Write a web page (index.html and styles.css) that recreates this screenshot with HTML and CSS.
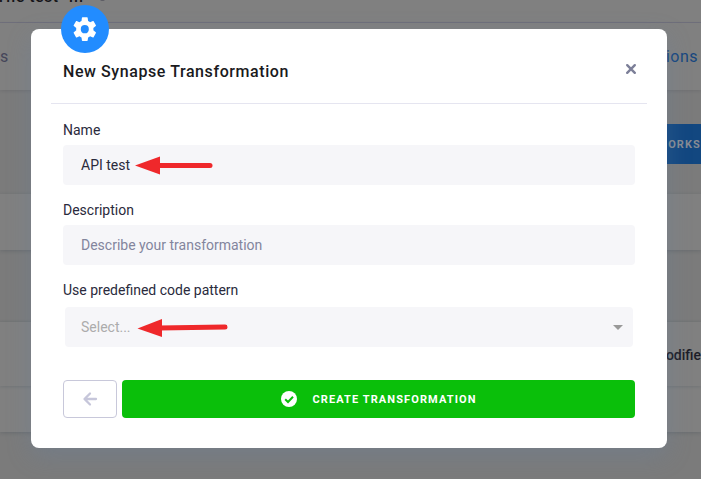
FILE: index.html
```html
<!DOCTYPE html>
<html lang="en">
<head>
<meta charset="utf-8">
<title>New Synapse Transformation</title>
<link rel="stylesheet" href="styles.css">
</head>
<body>
<div class="page">
  <header class="topbar"><span>The test -m</span><i class="topbar-caret"></i></header>
  <nav class="tabs"><span class="tab">s</span><span class="tab active">ions</span></nav>
  <section class="toolbar"><div class="works">ORKS</div></section>
  <div class="card"></div>
  <div class="table">
    <div class="table-head">odifie</div>
    <div class="table-row"></div>
  </div>
</div>
<div class="overlay">
  <main class="modal">
    <div class="badge">
      <svg width="27.600" height="28.400" viewBox="0 0 24 24" preserveAspectRatio="none" fill="#fff"><path d="M12 15.5A3.5 3.5 0 0 1 8.500 12 3.500 3.500 0 0 1 12 8.500 3.500 3.500 0 0 1 15.500 12 3.500 3.500 0 0 1 12 15.500M19.430 12.970C19.470 12.650 19.500 12.330 19.500 12S19.470 11.340 19.430 11L21.540 9.370C21.730 9.220 21.780 8.950 21.660 8.730L19.660 5.270C19.540 5.050 19.270 4.960 19.050 5.050L16.560 6.050C16.040 5.660 15.500 5.320 14.870 5.070L14.500 2.420C14.460 2.180 14.250 2 14 2H10C9.750 2 9.540 2.180 9.500 2.420L9.130 5.070C8.500 5.320 7.960 5.660 7.440 6.050L4.950 5.050C4.730 4.960 4.460 5.050 4.340 5.270L2.340 8.730C2.210 8.950 2.270 9.220 2.460 9.370L4.570 11C4.530 11.340 4.500 11.670 4.500 12S4.530 12.650 4.570 12.970L2.460 14.630C2.270 14.780 2.210 15.050 2.340 15.270L4.340 18.730C4.460 18.950 4.730 19.030 4.950 18.950L7.440 17.940C7.960 18.340 8.500 18.680 9.130 18.930L9.500 21.580C9.540 21.820 9.750 22 10 22H14C14.250 22 14.460 21.820 14.500 21.580L14.870 18.930C15.500 18.670 16.040 18.340 16.560 17.940L19.050 18.950C19.270 19.030 19.540 18.950 19.660 18.730L21.660 15.270C21.780 15.050 21.730 14.780 21.540 14.630Z"/></svg>
    </div>
    <div class="modal-head">
      <h1>New Synapse Transformation</h1>
      <svg class="close" width="12" height="12" viewBox="0 0 12 12"><path d="M2.200 2.200l7.600 7.600M9.800 2.200L2.200 9.800" stroke="#7c7f98" stroke-width="2.400" stroke-linecap="round"/></svg>
    </div>
    <form class="form">
      <label>Name</label>
      <div class="field"><span>API test</span>
        <svg class="arrow arrow-name" width="80" height="20" viewBox="0 0 80 20"><path d="M22 10.500L75 10.500" stroke="#ef282b" stroke-width="5" stroke-linecap="round"/><path d="M0 10.500L25 1.500V19.500Z" fill="#ef282b"/></svg>
      </div>
      <label>Description</label>
      <div class="field placeholder">Describe your transformation</div>
      <label>Use predefined code pattern</label>
      <div class="field select"><span>Select...</span><i class="caret"></i>
        <svg class="arrow arrow-select" width="92" height="20" viewBox="0 0 92 20"><path d="M22 11L88 10" stroke="#ef282b" stroke-width="5" stroke-linecap="round"/><path d="M0.500 11.500L25 2V20Z" fill="#ef282b"/></svg>
      </div>
      <div class="actions">
        <button type="button" class="back"><svg width="16" height="16" viewBox="0 0 16 16"><path d="M14 8H3M8 2.500L2.500 8L8 13.500" fill="none" stroke="#c6c6da" stroke-width="2.300" stroke-linecap="round" stroke-linejoin="round"/></svg></button>
        <button type="button" class="create"><svg width="16" height="16" viewBox="0 0 16 16"><circle cx="8" cy="8" r="8" fill="#fff"/><path d="M4.200 8.300L7 11L12 5.800" fill="none" stroke="#0abf0a" stroke-width="2"/></svg><span>CREATE TRANSFORMATION</span></button>
      </div>
    </form>
  </main>
</div>
</body>
</html>
```
FILE: styles.css
```css
* { box-sizing: border-box; }
body { margin: 0; height: 479px; overflow: hidden; font-family: Roboto, sans-serif; background: #7b7b7b; }
.page { height: 479px; overflow: hidden; }
.topbar { height: 23px; background: #808080; border-bottom: 1px solid #71717c; display: flex; gap: 16px; font-size: 16px; font-weight: 500; letter-spacing: .5px; line-height: 20px; color: #141418; }
.topbar span { margin: -13px 0 0 -4px; }
.topbar-caret { width: 5px; height: 2px; background: #5d5d65; border-radius: 0 0 3px 3px; margin-top: -1px; }
.tabs { height: 67px; background: #808080; display: flex; justify-content: space-between; align-items: center; padding-right: 3px; font-size: 16px; letter-spacing: .5px; color: #45465a; box-shadow: 0 1px 3px rgba(30, 35, 50, .12); }
.tabs .active { color: #17477f; }
.toolbar { height: 104px; padding-top: 34px; display: flex; justify-content: flex-end; }
.works { width: 60px; height: 40px; background: #124780; color: #858b94; font-size: 11px; font-weight: 700; letter-spacing: 1.100px; line-height: 41px; text-align: right; }
.card { height: 56px; background: #808080; box-shadow: 0 1px 4px rgba(30, 45, 60, .2); }
.table { margin-top: 72px; background: #808080; box-shadow: 0 1px 4px rgba(30, 45, 60, .2); }
.table-head { height: 64px; line-height: 66px; text-align: right; font-size: 14px; font-weight: 500; color: #1c1c27; box-shadow: 0 1px 3px rgba(30, 45, 60, .15); }
.table-row { height: 46px; }
.overlay { position: absolute; inset: 0; padding: 29px 34px 31px 31px; }
.modal { position: relative; height: 419px; padding: 0 20px; border-radius: 8px; background: #fff; box-shadow: 0 8px 24px rgba(100, 130, 165, .3); }
.badge { position: absolute; left: 30px; top: -24px; width: 48px; height: 48px; border-radius: 50%; background: #228cff; display: flex; align-items: center; justify-content: center; }
.modal-head { height: 75px; padding: 12px 10px 0 12px; border-bottom: 1px solid #e5e5f0; display: flex; align-items: center; justify-content: space-between; }
h1 { margin: 0; font-size: 16px; line-height: 24px; font-weight: 500; letter-spacing: .58px; color: #1a1a1d; }
.close { margin-top: -6px; }
.form { padding: 16px 12px 0; display: flex; flex-direction: column; font-size: 14px; color: #2a2a3c; }
label { height: 20px; line-height: 20px; margin-bottom: 5px; }
.field { position: relative; height: 40px; margin-bottom: 15px; padding: 0 18px; border-radius: 4px; background: #f6f6f9; line-height: 40px; }
.placeholder { color: #83859d; }
.select { margin: 2px 2px 0; padding: 0 10px 0 16px; color: #acacac; display: flex; align-items: center; justify-content: space-between; }
.caret { border: 5px solid transparent; border-top-color: #999; border-bottom: 0; }
.arrow { position: absolute; }
.arrow-name { left: 72px; top: 10px; }
.arrow-select { left: 72px; top: 10px; }
.actions { display: flex; gap: 5px; margin-top: 33px; }
button { height: 38px; padding: 0; border: 0; border-radius: 4px; display: flex; align-items: center; justify-content: center; font-family: inherit; }
.back { width: 54px; border: 1px solid #c8c8da; background: #fff; }
.create { flex: 1; gap: 15px; padding-left: 1px; background: #0abf0a; color: #fff; font-size: 11px; font-weight: 700; letter-spacing: 1.100px; }
```
